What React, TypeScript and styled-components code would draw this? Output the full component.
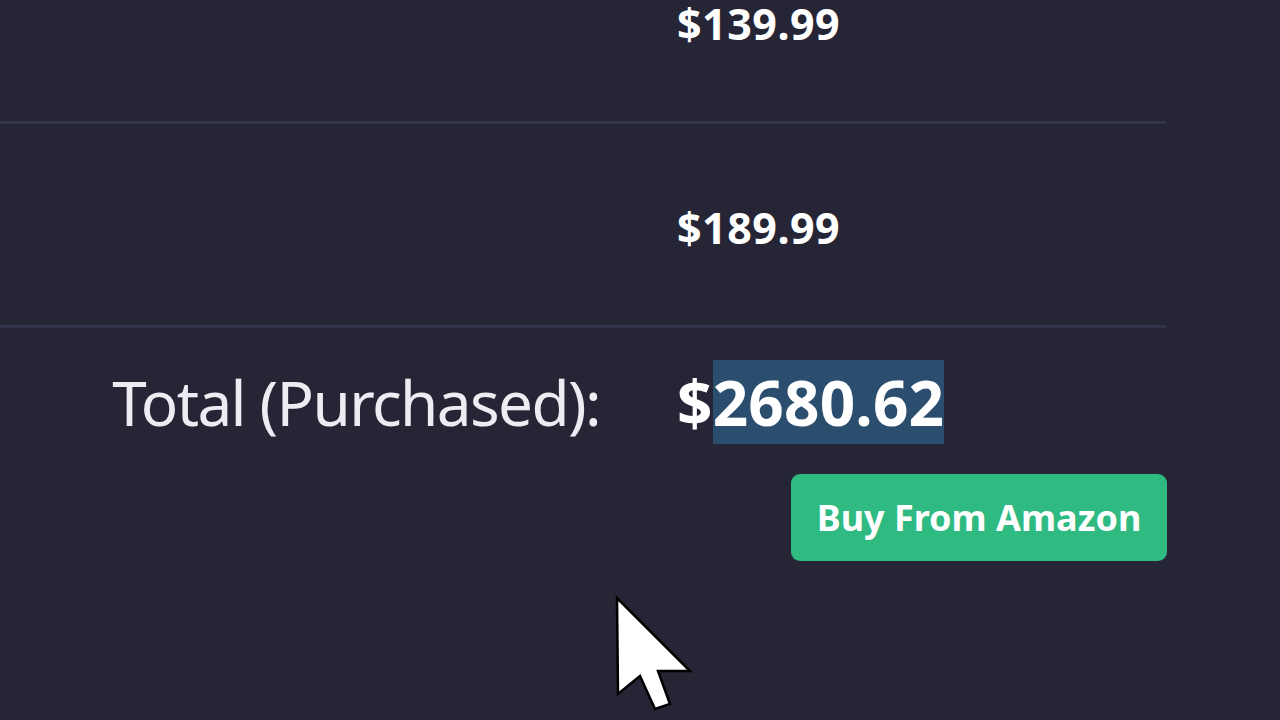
import React from 'react';
import styled, { createGlobalStyle } from 'styled-components';

const GlobalStyle = createGlobalStyle`
  html, body {
    margin: 0;
    padding: 0;
    background: #252536;
    overflow: hidden;
  }
  body {
    font-family: 'Noto Sans', 'Open Sans', sans-serif;
    color: #ffffff;
  }
`;

const Page = styled.div`
  width: 1280px;
  height: 720px;
  position: relative;
  overflow: hidden;
`;

const Table = styled.div`
  width: 1166px;
  margin-top: -80px;
`;

const Row = styled.div`
  display: grid;
  grid-template-columns: 677px 1fr;
  align-items: center;
  height: 201px;
  border-bottom: 3px solid #34344a;
`;

const Price = styled.div`
  grid-column: 2;
  font-size: 43px;
  line-height: 1;
  font-weight: 700;
  letter-spacing: 0.5px;
  padding-top: 6px;
`;

const TotalRow = styled.div`
  display: grid;
  grid-template-columns: 677px 1fr;
  align-items: center;
  padding-top: 32px;
`;

const TotalLabel = styled.div`
  font-size: 62px;
  font-weight: 400;
  color: #ececf2;
  text-align: right;
  letter-spacing: -1.6px;
  padding-right: 77px;
`;

const TotalValue = styled.div`
  font-size: 62px;
  font-weight: 700;
  letter-spacing: 0.2px;
`;

const Selected = styled.span`
  background: #2c4e6e;
`;

const Actions = styled.div`
  display: flex;
  justify-content: flex-end;
  padding-top: 30px;
`;

const BuyButton = styled.button`
  width: 376px;
  height: 87px;
  border: none;
  border-radius: 9px;
  background: #2fba82;
  color: #ffffff;
  font-family: 'Noto Sans', 'Open Sans', sans-serif;
  font-size: 36px;
  font-weight: 700;
  cursor: pointer;
  margin-right: -1px;
`;

const Cursor = styled.svg`
  position: absolute;
  left: 612px;
  top: 593px;
`;

const prices = ['$139.99', '$189.99'];

const App = () => (
  <Page>
    <GlobalStyle />
    <Table>
      {prices.map((p) => (
        <Row key={p}>
          <Price>{p}</Price>
        </Row>
      ))}
      <TotalRow>
        <TotalLabel>Total (Purchased):</TotalLabel>
        <TotalValue>
          $<Selected>2680.62</Selected>
        </TotalValue>
      </TotalRow>
      <Actions>
        <BuyButton>Buy From Amazon</BuyButton>
      </Actions>
    </Table>
    <Cursor width="90" height="125" viewBox="0 0 90 125">
      <polygon
        points="5,5 6,101 28,83 43,116 58,111 46,78 78,78"
        fill="#ffffff"
        stroke="#000000"
        strokeWidth="2.5"
        strokeLinejoin="miter"
      />
    </Cursor>
  </Page>
);

export default App;
